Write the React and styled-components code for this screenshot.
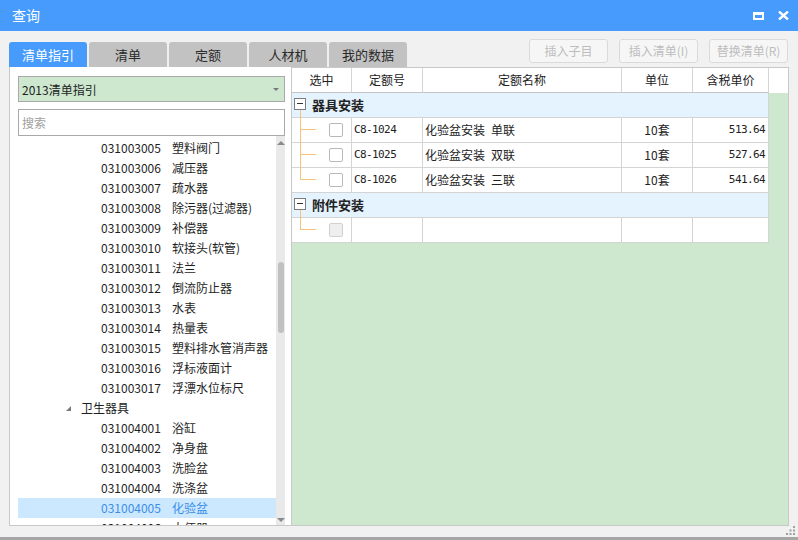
import React from 'react';
import styled, { createGlobalStyle } from 'styled-components';

const GlobalStyle = createGlobalStyle`
  html, body { margin: 0; padding: 0; }
  body {
    background: #f1f1f1;
    font-family: "Noto Sans CJK SC", "Noto Sans", sans-serif;
    color: #222;
  }
  * { box-sizing: border-box; }
`;

const BLUE = '#469bfd';
const GREEN = '#cde8cf';
const LINE = '#d4d4d4';
const TREE = '#f7c37a';

const Window = styled.div`
  width: 798px;
  height: 540px;
  display: flex;
  flex-direction: column;
  background: #f1f1f1;
  border-bottom: 3px solid #a6a6a6;
  overflow: hidden;
`;

const TitleBar = styled.div`
  height: 31px;
  flex: none;
  background: ${BLUE};
  display: flex;
  align-items: center;
  padding: 0 9px 0 12px;
  color: #fff;
  font-size: 14px;
`;

const Title = styled.div`
  flex: 1;
  line-height: 31px;
`;

const MaxIcon = styled.div`
  width: 11px;
  height: 8px;
  border: 2px solid #fff;
  border-top-width: 3px;
  margin-right: 14px;
`;

const TopRow = styled.div`
  height: 36px;
  flex: none;
  display: flex;
  align-items: flex-start;
  padding: 0 10px 0 9px;
`;

const Tabs = styled.div`
  display: flex;
  gap: 2px;
  margin-top: 11px;
`;

const Tab = styled.div`
  width: 78px;
  height: 25px;
  border-radius: 3px 3px 0 0;
  background: ${(p) => (p.$active ? BLUE : '#c2c2c2')};
  color: ${(p) => (p.$active ? '#fff' : '#2a2a2a')};
  font-size: 13px;
  line-height: 25px;
  text-align: center;
`;

const Buttons = styled.div`
  margin-left: auto;
  margin-top: 8px;
  display: flex;
  gap: 11px;
`;

const Btn = styled.div`
  width: 79px;
  height: 24px;
  border: 1px solid #dadada;
  border-radius: 3px;
  background: #f6f6f6;
  color: #bdbdbd;
  font-size: 12px;
  line-height: 22px;
  text-align: center;
`;

const Main = styled.div`
  height: 459px;
  flex: none;
  display: flex;
  padding: 0 9px;
`;

const LeftPanel = styled.div`
  width: 283px;
  flex: none;
  background: #fff;
  border: 1px solid #c8c8c8;
  border-top: none;
  padding: 9px 6px 0 8px;
  display: flex;
  flex-direction: column;
`;

const Select = styled.div`
  height: 26px;
  flex: none;
  background: ${GREEN};
  border: 1px solid #a9a9a9;
  display: flex;
  align-items: center;
  padding: 0 5px 0 3px;
  font-size: 12px;
  &::after {
    content: '';
    margin-left: auto;
    border-left: 3px solid transparent;
    border-right: 3px solid transparent;
    border-top: 3px solid #777;
  }
`;

const Search = styled.div`
  height: 27px;
  flex: none;
  margin-top: 7px;
  border: 1px solid #a9a9a9;
  padding-left: 3px;
  font-size: 12px;
  line-height: 25px;
  color: #a0a0a0;
`;

const Tree = styled.div`
  flex: 1;
  min-height: 0;
  display: flex;
`;

const TreeList = styled.div`
  flex: 1;
  overflow: hidden;
  padding-top: 2px;
`;

const TreeRow = styled.div`
  height: 20px;
  display: flex;
  align-items: center;
  padding-left: ${(p) => (p.$group ? 48 : 83)}px;
  font-size: 12px;
  line-height: 20px;
  white-space: nowrap;
  background: ${(p) => (p.$selected ? '#cce8ff' : 'transparent')};
  color: ${(p) => (p.$selected ? '#3b8ee8' : '#1e1e1e')};
`;

const Code = styled.span`
  width: 71px;
  flex: none;
`;

const Caret = styled.span`
  width: 0;
  height: 0;
  border-left: 5px solid transparent;
  border-bottom: 5px solid #7a7a7a;
  margin-right: 10px;
  margin-top: 1px;
`;

const ScrollBar = styled.div`
  width: 9px;
  flex: none;
  background: #e9e9e9;
  display: flex;
  flex-direction: column;
  align-items: center;
`;

const ArrowUp = styled.div`
  margin-top: 5px;
  border-left: 4px solid transparent;
  border-right: 4px solid transparent;
  border-bottom: 4px solid #8a8a8a;
`;

const ArrowDown = styled.div`
  margin-top: auto;
  margin-bottom: 3px;
  border-left: 4px solid transparent;
  border-right: 4px solid transparent;
  border-top: 4px solid #8a8a8a;
`;

const Thumb = styled.div`
  margin-top: 117px;
  width: 6px;
  height: 71px;
  border-radius: 3px;
  background: #c1c1c1;
`;

const RightPanel = styled.div`
  flex: 1;
  background: ${GREEN};
  border: 1px solid #c8c8c8;
  border-left: none;
  display: flex;
  flex-direction: column;
`;

const HeaderBar = styled.div`
  background: #fff;
  flex: none;
`;

const Grid = styled.div`
  width: 477px;
  display: grid;
  grid-template-columns: 60px 71px 199px 71px 76px;
  background: #fff;
`;

const HeadCell = styled.div`
  height: 25px;
  border-right: 1px solid ${LINE};
  border-bottom: 1px solid #c4c4c4;
  font-size: 12px;
  line-height: 24px;
  text-align: center;
`;

const Cell = styled.div`
  height: 25px;
  border-right: 1px solid ${LINE};
  border-bottom: 1px solid ${LINE};
  font-size: ${(p) => (p.$mono ? 11 : 12)}px;
  letter-spacing: ${(p) => (p.$mono ? '-0.6px' : 'normal')};
  font-family: ${(p) =>
    p.$mono ? '"DejaVu Sans Mono", "Liberation Mono", monospace' : 'inherit'};
  line-height: 24px;
  white-space: pre;
  text-align: ${(p) => p.$align || 'left'};
  padding: 0 ${(p) => (p.$align === 'right' ? 3 : 0)}px 0
    ${(p) => (p.$align === 'left' || !p.$align ? 2 : 0)}px;
`;

const SelectCell = styled.div`
  position: relative;
  height: 25px;
  border-right: 1px solid ${LINE};
  border-bottom: 1px solid ${LINE};
  display: flex;
  align-items: center;
  padding-left: 37px;
  &::before {
    content: '';
    position: absolute;
    left: 8px;
    top: -1px;
    width: 1px;
    height: ${(p) => (p.$last ? '13px' : '26px')};
    background: ${TREE};
  }
  &::after {
    content: '';
    position: absolute;
    left: 8px;
    top: 11px;
    width: 16px;
    height: 1px;
    background: ${TREE};
  }
`;

const Check = styled.div`
  width: 14px;
  height: 14px;
  border: 1px solid ${(p) => (p.$disabled ? '#d0d0d0' : '#b8b8b8')};
  border-radius: 2px;
  background: ${(p) => (p.$disabled ? '#efefef' : '#fff')};
`;

const GroupRow = styled.div`
  grid-column: 1 / -1;
  height: 25px;
  background: #e5f3fe;
  border-right: 1px solid ${LINE};
  border-bottom: 1px solid ${LINE};
  display: flex;
  align-items: flex-start;
  padding-left: 2px;
  font-size: 13px;
  font-weight: bold;
  line-height: 24px;
  color: #222;
`;

const Expander = styled.div`
  position: relative;
  width: 12px;
  height: 12px;
  margin-top: 5px;
  margin-right: 6px;
  border: 1px solid #7d7d7d;
  background: #fff;
  &::before {
    content: '';
    position: absolute;
    left: 2px;
    top: 4px;
    width: 6px;
    height: 1px;
    background: #333;
  }
  &::after {
    content: '';
    position: absolute;
    left: 5px;
    top: 11px;
    width: 1px;
    height: 8px;
    background: ${TREE};
  }
`;

const Footer = styled.div`
  flex: 1;
  display: flex;
  justify-content: flex-end;
  padding-right: 3px;
`;

const treeItems = [
  ['031003005', '塑料阀门'],
  ['031003006', '减压器'],
  ['031003007', '疏水器'],
  ['031003008', '除污器(过滤器)'],
  ['031003009', '补偿器'],
  ['031003010', '软接头(软管)'],
  ['031003011', '法兰'],
  ['031003012', '倒流防止器'],
  ['031003013', '水表'],
  ['031003014', '热量表'],
  ['031003015', '塑料排水管消声器'],
  ['031003016', '浮标液面计'],
  ['031003017', '浮漂水位标尺'],
  [null, '卫生器具'],
  ['031004001', '浴缸'],
  ['031004002', '净身盘'],
  ['031004003', '洗脸盆'],
  ['031004004', '洗涤盆'],
  ['031004005', '化验盆', true],
  ['031004006', '大便器'],
];

const groups = [
  {
    name: '器具安装',
    rows: [
      ['C8-1024', '化验盆安装\u2002单联', '10套', '513.64'],
      ['C8-1025', '化验盆安装\u2002双联', '10套', '527.64'],
      ['C8-1026', '化验盆安装\u2002三联', '10套', '541.64'],
    ],
  },
  { name: '附件安装', rows: [null] },
];

export default function App() {
  return (
    <>
      <GlobalStyle />
      <Window>
        <TitleBar>
          <Title>查询</Title>
          <MaxIcon />
          <svg width="11" height="9" viewBox="0 0 11 9">
            <path d="M1 0.5 L10 8.5 M10 0.5 L1 8.5" stroke="#fff" strokeWidth="2.4" />
          </svg>
        </TitleBar>
        <TopRow>
          <Tabs>
            <Tab $active>清单指引</Tab>
            <Tab>清单</Tab>
            <Tab>定额</Tab>
            <Tab>人材机</Tab>
            <Tab>我的数据</Tab>
          </Tabs>
          <Buttons>
            <Btn>插入子目</Btn>
            <Btn>插入清单(I)</Btn>
            <Btn>替换清单(R)</Btn>
          </Buttons>
        </TopRow>
        <Main>
          <LeftPanel>
            <Select>2013清单指引</Select>
            <Search>搜索</Search>
            <Tree>
              <TreeList>
                {treeItems.map(([code, name, sel], i) =>
                  code ? (
                    <TreeRow key={i} $selected={sel}>
                      <Code>{code}</Code>
                      <span>{name}</span>
                    </TreeRow>
                  ) : (
                    <TreeRow key={i} $group>
                      <Caret />
                      <span>{name}</span>
                    </TreeRow>
                  )
                )}
              </TreeList>
              <ScrollBar>
                <ArrowUp />
                <Thumb />
                <ArrowDown />
              </ScrollBar>
            </Tree>
          </LeftPanel>
          <RightPanel>
            <HeaderBar>
              <Grid>
                <HeadCell>选中</HeadCell>
                <HeadCell>定额号</HeadCell>
                <HeadCell>定额名称</HeadCell>
                <HeadCell>单位</HeadCell>
                <HeadCell>含税单价</HeadCell>
              </Grid>
            </HeaderBar>
            <Grid>
              {groups.map((g) => (
                <React.Fragment key={g.name}>
                  <GroupRow>
                    <Expander />
                    {g.name}
                  </GroupRow>
                  {g.rows.map((r, i) => {
                    const last = i === g.rows.length - 1;
                    return (
                      <React.Fragment key={i}>
                        <SelectCell $last={last}>
                          <Check $disabled={!r} />
                        </SelectCell>
                        <Cell $mono>{r ? r[0] : ''}</Cell>
                        <Cell>{r ? r[1] : ''}</Cell>
                        <Cell $align="center">{r ? r[2] : ''}</Cell>
                        <Cell $mono $align="right">{r ? r[3] : ''}</Cell>
                      </React.Fragment>
                    );
                  })}
                </React.Fragment>
              ))}
            </Grid>
          </RightPanel>
        </Main>
        <Footer>
          <svg width="9" height="9" viewBox="0 0 9 9">
            <g fill="#a0a0a0">
              <rect x="7" y="0" width="2" height="2" />
              <rect x="3.5" y="3.5" width="2" height="2" />
              <rect x="7" y="3.5" width="2" height="2" />
              <rect x="0" y="7" width="2" height="2" />
              <rect x="3.5" y="7" width="2" height="2" />
              <rect x="7" y="7" width="2" height="2" />
            </g>
          </svg>
        </Footer>
      </Window>
    </>
  );
}
